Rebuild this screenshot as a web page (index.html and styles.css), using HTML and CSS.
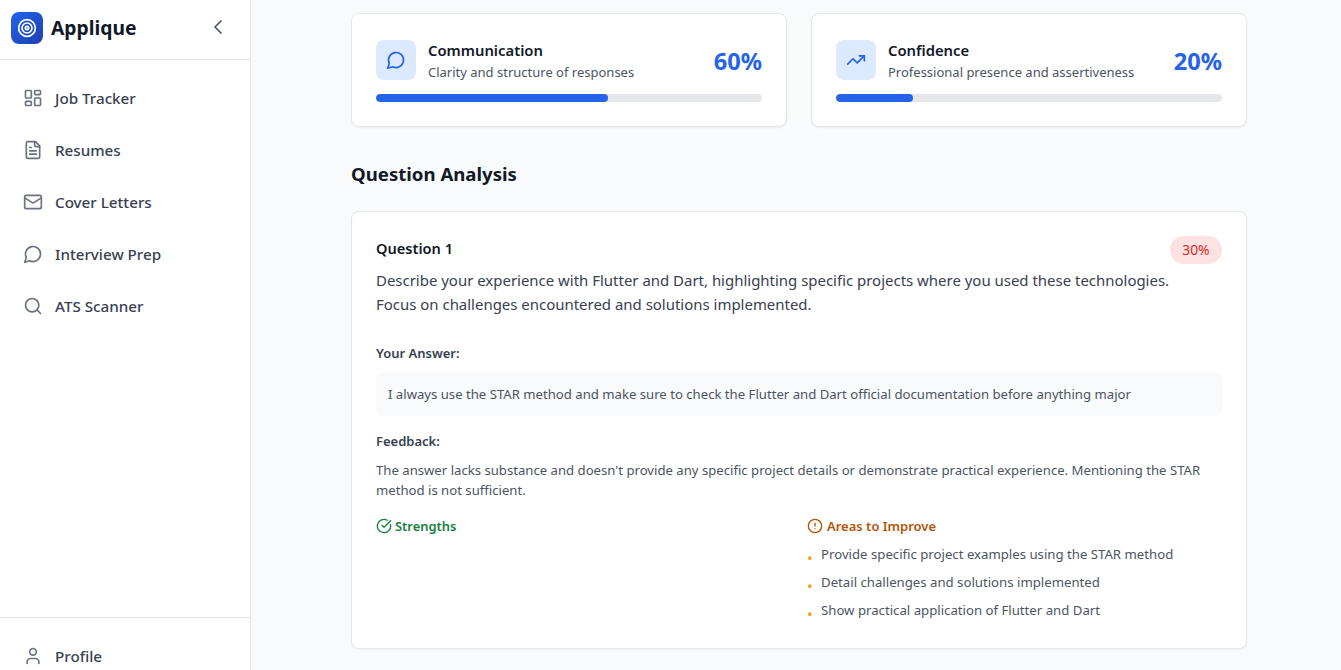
FILE: index.html
```html
<!DOCTYPE html>
<html lang="en">
<head>
<meta charset="utf-8">
<title>Applique</title>
<link rel="stylesheet" href="styles.css">
</head>
<body>
<div class="app">
  <aside class="sidebar">
    <div class="brand">
      <div class="logo">
        <svg width="24" height="24" viewBox="0 0 24 24" fill="none" stroke="#fff" stroke-width="2"><circle cx="12" cy="12" r="10"/><circle cx="12" cy="12" r="6"/><circle cx="12" cy="12" r="2"/></svg>
      </div>
      <span class="brand-name">Applique</span>
      <svg class="collapse" viewBox="0 0 24 24" fill="none" stroke="#4b5563" stroke-width="1.7" stroke-linecap="round" stroke-linejoin="round"><path d="m15 18-6-6 6-6"/></svg>
    </div>
    <nav class="nav">
      <a class="nav-item"><svg class="nav-icon" viewBox="0 0 24 24"><rect x="3" y="3" width="7" height="9" rx="1"/><rect x="14" y="3" width="7" height="5" rx="1"/><rect x="14" y="12" width="7" height="9" rx="1"/><rect x="3" y="16" width="7" height="5" rx="1"/></svg>Job Tracker</a>
      <a class="nav-item"><svg class="nav-icon" viewBox="0 0 24 24"><path d="M15 2H6a2 2 0 0 0-2 2v16a2 2 0 0 0 2 2h12a2 2 0 0 0 2-2V7Z"/><path d="M14 2v4a2 2 0 0 0 2 2h4"/><path d="M10 9H8"/><path d="M16 13H8"/><path d="M16 17H8"/></svg>Resumes</a>
      <a class="nav-item"><svg class="nav-icon" viewBox="0 0 24 24"><rect x="2" y="4" width="20" height="16" rx="2"/><path d="m22 7-8.97 5.7a1.94 1.94 0 0 1-2.06 0L2 7"/></svg>Cover Letters</a>
      <a class="nav-item"><svg class="nav-icon" viewBox="0 0 24 24"><path d="M7.9 20A9 9 0 1 0 4 16.1L2 22Z"/></svg>Interview Prep</a>
      <a class="nav-item"><svg class="nav-icon" viewBox="0 0 24 24"><circle cx="11" cy="11" r="8"/><path d="m21 21-4.3-4.3"/></svg>ATS Scanner</a>
    </nav>
    <div class="sidebar-foot">
      <a class="nav-item"><svg class="nav-icon" viewBox="0 0 24 24"><path d="M19 21v-2a4 4 0 0 0-4-4H9a4 4 0 0 0-4 4v2"/><circle cx="12" cy="7" r="4"/></svg>Profile</a>
    </div>
  </aside>
  <main class="main">
    <div class="content">
      <div class="metrics">
        <section class="card metric">
          <div class="metric-head">
            <div class="metric-icon"><svg class="blue-icon" viewBox="0 0 24 24"><path d="M7.9 20A9 9 0 1 0 4 16.1L2 22Z"/></svg></div>
            <div class="metric-text">
              <div class="metric-title">Communication</div>
              <div class="metric-sub">Clarity and structure of responses</div>
            </div>
            <div class="metric-value">60%</div>
          </div>
          <div class="track"><div class="fill" style="width:60%"></div></div>
        </section>
        <section class="card metric">
          <div class="metric-head">
            <div class="metric-icon"><svg class="blue-icon" viewBox="0 0 24 24"><path d="M22 7 13.5 15.5 8.5 10.5 2 17"/><path d="M16 7h6v6"/></svg></div>
            <div class="metric-text">
              <div class="metric-title">Confidence</div>
              <div class="metric-sub">Professional presence and assertiveness</div>
            </div>
            <div class="metric-value">20%</div>
          </div>
          <div class="track"><div class="fill" style="width:20%"></div></div>
        </section>
      </div>
      <h2 class="section-title">Question Analysis</h2>
      <section class="card question">
        <div class="q-head">
          <h3 class="q-title">Question 1</h3>
          <span class="badge">30%</span>
        </div>
        <p class="q-text">Describe your experience with Flutter and Dart, highlighting specific projects where you used these technologies. Focus on challenges encountered and solutions implemented.</p>
        <h4 class="label answer-label">Your Answer:</h4>
        <div class="answer">I always use the STAR method and make sure to check the Flutter and Dart official documentation before anything major</div>
        <h4 class="label feedback-label">Feedback:</h4>
        <p class="feedback">The answer lacks substance and doesn't provide any specific project details or demonstrate practical experience. Mentioning the STAR method is not sufficient.</p>
        <div class="split">
          <div>
            <div class="split-title green"><svg class="mini" viewBox="0 0 24 24"><path d="M21.8 10A10 10 0 1 1 17 3.34"/><path d="m9 11 3 3L22 4"/></svg>Strengths</div>
          </div>
          <div>
            <div class="split-title orange"><svg class="mini" viewBox="0 0 24 24"><circle cx="12" cy="12" r="10"/><path d="M12 8v4"/><path d="M12 16h.01"/></svg>Areas to Improve</div>
            <ul class="improve">
              <li>Provide specific project examples using the STAR method</li>
              <li>Detail challenges and solutions implemented</li>
              <li>Show practical application of Flutter and Dart</li>
            </ul>
          </div>
        </div>
      </section>
    </div>
  </main>
</div>
</body>
</html>
```
FILE: styles.css
```css
* { box-sizing: border-box; }
html, body { margin: 0; height: 100%; overflow: hidden; }
body { font-family: "Noto Sans", sans-serif; background: #f9fafb; color: #111827; }
.app { display: flex; height: 670px; overflow: hidden; }
.sidebar { width: 251px; flex: none; height: 670px; background: #fff; border-right: 1px solid #e5e7eb; display: flex; flex-direction: column; }
.brand { height: 60px; flex: none; display: flex; align-items: center; padding: 0 20px 4px 11px; border-bottom: 1px solid #e5e7eb; }
.logo { width: 32px; height: 32px; border-radius: 8px; background: linear-gradient(135deg, #2563eb, #1e40af); display: flex; align-items: center; justify-content: center; }
.logo svg { width: 20px; height: 20px; }
.brand-name { margin-left: 8px; font-size: 19.3px; font-weight: 700; color: #111827; flex: 1; }
.collapse { width: 24px; height: 24px; flex: none; margin-bottom: 2px; }
.nav { flex: 1; padding-top: 14px; display: flex; flex-direction: column; gap: 4px; }
.nav-item { height: 48px; flex: none; display: flex; align-items: center; gap: 12px; padding-left: 23px; font-size: 15.2px; font-weight: 500; color: #374151; }
.nav-icon { width: 20px; height: 20px; flex: none; fill: none; stroke: #6b7280; stroke-width: 2; stroke-linecap: round; stroke-linejoin: round; }
.sidebar-foot { height: 53px; flex: none; border-top: 1px solid #e5e7eb; padding-top: 14px; }
.main { flex: 1; min-width: 0; padding: 13px 94px 0 100px; }
.content { width: 896px; }
.metrics { display: grid; grid-template-columns: 436px 436px; gap: 24px; }
.card { background: #fff; border: 1px solid #e5e7eb; border-radius: 8px; box-shadow: 0 1px 2px rgba(0,0,0,.05); }
.metric { height: 114px; padding: 26px 24px 0; }
.metric-head { display: flex; align-items: center; gap: 12px; height: 40px; }
.metric-icon { width: 40px; height: 40px; border-radius: 8px; background: #dbeafe; display: flex; align-items: center; justify-content: center; flex: none; }
.blue-icon { width: 20px; height: 20px; fill: none; stroke: #2563eb; stroke-width: 2; stroke-linecap: round; stroke-linejoin: round; }
.metric-text { flex: 1; min-width: 0; margin-top: 1px; }
.metric-title { font-size: 14.8px; font-weight: 600; line-height: 22px; color: #111827; }
.metric-sub { font-size: 13px; line-height: 20px; color: #4b5563; margin-top: 1px; }
.metric-value { font-size: 23.6px; font-weight: 700; color: #2563eb; line-height: 32px; margin-top: 2px; }
.track { margin-top: 14px; height: 8px; border-radius: 4px; background: #e5e7eb; overflow: hidden; }
.fill { height: 100%; border-radius: 4px; background: #2563eb; }
.section-title { margin: 33px 0 23px; font-size: 18.6px; line-height: 28px; font-weight: 700; color: #111827; }
.question { height: 438px; padding: 24px; }
.q-head { display: flex; justify-content: space-between; align-items: center; height: 28px; }
.q-title { margin: 0 0 4px; font-size: 14.6px; font-weight: 600; color: #111827; }
.badge { height: 28px; padding: 0 12.5px; border-radius: 14px; background: #fee2e2; color: #dc2626; font-size: 13.8px; font-weight: 400; line-height: 28px; }
.q-text { margin: 4px 0 0; max-width: 810px; font-size: 14.96px; line-height: 24px; color: #374151; }
.label { margin: 0; font-size: 13px; line-height: 20px; font-weight: 600; color: #374151; }
.answer-label { margin-top: 27px; }
.answer { margin-top: 9px; height: 44px; padding: 0 12px; border-radius: 8px; background: #f9fafb; font-size: 13.15px; line-height: 44px; color: #4b5563; }
.feedback-label { margin-top: 15px; }
.feedback { margin: 9px 0 0; font-size: 13.15px; line-height: 20px; color: #4b5563; }
.split { display: grid; grid-template-columns: 1fr 1fr; gap: 16px; margin-top: 16px; }
.split-title { display: flex; align-items: center; font-size: 12.9px; line-height: 20px; font-weight: 600; }
.mini { width: 16px; height: 16px; fill: none; stroke: currentColor; stroke-width: 2; stroke-linecap: round; stroke-linejoin: round; flex: none; }
.green { color: #15803d; gap: 3px; }
.orange { color: #b45309; gap: 4px; font-size: 13px; }
.improve { list-style: none; margin: 8px 0 0; padding: 0; display: flex; flex-direction: column; gap: 8px; }
.improve li { display: flex; gap: 8px; font-size: 13.2px; line-height: 20px; color: #4b5563; }
.improve li::before { content: "•"; color: #f59e0b; flex: none; width: 6px; position: relative; top: 4px; font-size: 15px; }
```
